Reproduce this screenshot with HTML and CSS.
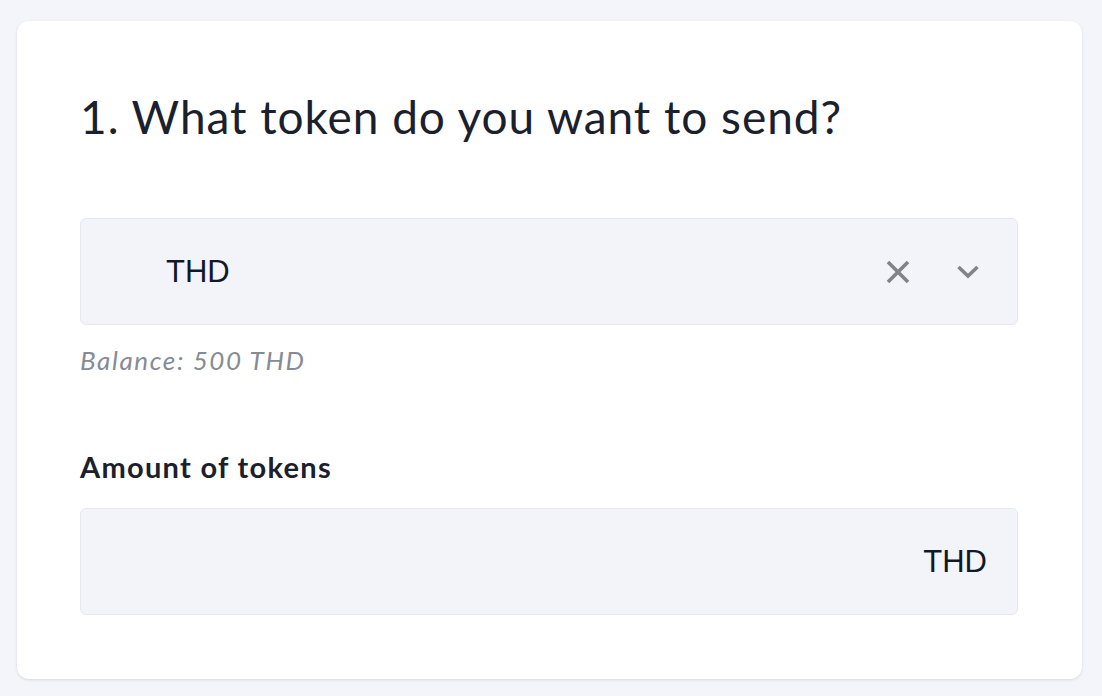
FILE: index.html
```html
<!DOCTYPE html>
<html lang="en">
<head>
    <meta charset="UTF-8">
    <meta name="viewport" content="width=device-width, initial-scale=1.0">
    <title>Send tokens</title>
    <link rel="stylesheet" href="styles.css">
</head>
<body>
    <div id="card">
        <h2>1. What token do you want to send?</h2>

        <!-- Token select -->
        <div class="select">
            <span class="select-value">THD</span>
            <span class="select-icons">
                <svg class="icon-clear" width="24" height="24" viewBox="0 0 24 24">
                    <path d="M2 2 L22 22 M22 2 L2 22" stroke="#808389" stroke-width="3.6" fill="none"/>
                </svg>
                <svg class="icon-chevron" width="24" height="16" viewBox="0 0 24 16">
                    <path d="M2.5 3 L12 12 L21.5 3" stroke="#808389" stroke-width="3.6" fill="none" stroke-linejoin="miter"/>
                </svg>
            </span>
        </div>
        <div class="balance">Balance: 500 THD</div>

        <!-- Amount -->
        <label for="amount">Amount of tokens</label>
        <div class="amount">
            <input type="text" id="amount" name="amount">
            <span class="unit">THD</span>
        </div>
    </div>
</body>
</html>
```

FILE: styles.css
```css
body {
    font-family: Lato, "Noto Sans", sans-serif;
    background-color: #f4f5fa;
    margin: 0;
    padding: 21px 20px 18px 17px;
}

#card {
    background: white;
    border-radius: 12px;
    box-shadow: 0 1px 3px rgba(0, 0, 0, 0.12);
    padding: 68px 64px 64px 63px;
}

h2 {
    margin: 0 0 73px 0;
    font-size: 46px;
    line-height: 56px;
    font-weight: 400;
    letter-spacing: 0.95px;
    color: #1a202c;
}

.select,
.amount {
    display: flex;
    align-items: center;
    height: 105px;
    background: #f3f4f9;
    border: 1px solid #e6e8ef;
    border-radius: 6px;
}

.select-value,
.unit {
    font-family: "Liberation Sans", Arial, sans-serif;
    font-size: 31px;
    color: #111827;
}

.select-value {
    flex: 1;
    padding-left: 85px;
}

.select-icons {
    display: flex;
    align-items: center;
    gap: 46px;
    padding-right: 37px;
}

.balance {
    margin-top: 20px;
    font-size: 26px;
    line-height: 31px;
    font-style: italic;
    letter-spacing: 1.6px;
    color: #868b95;
}

label {
    display: block;
    margin-top: 73px;
    margin-bottom: 24px;
    font-size: 29px;
    line-height: 35px;
    font-weight: 700;
    letter-spacing: 1.3px;
    color: #1a202c;
}

.amount input {
    flex: 1;
    min-width: 0;
    height: 100%;
    border: none;
    background: transparent;
    outline: none;
    padding: 0 20px;
    font-size: 31px;
}

.unit {
    padding-right: 30px;
}
```
